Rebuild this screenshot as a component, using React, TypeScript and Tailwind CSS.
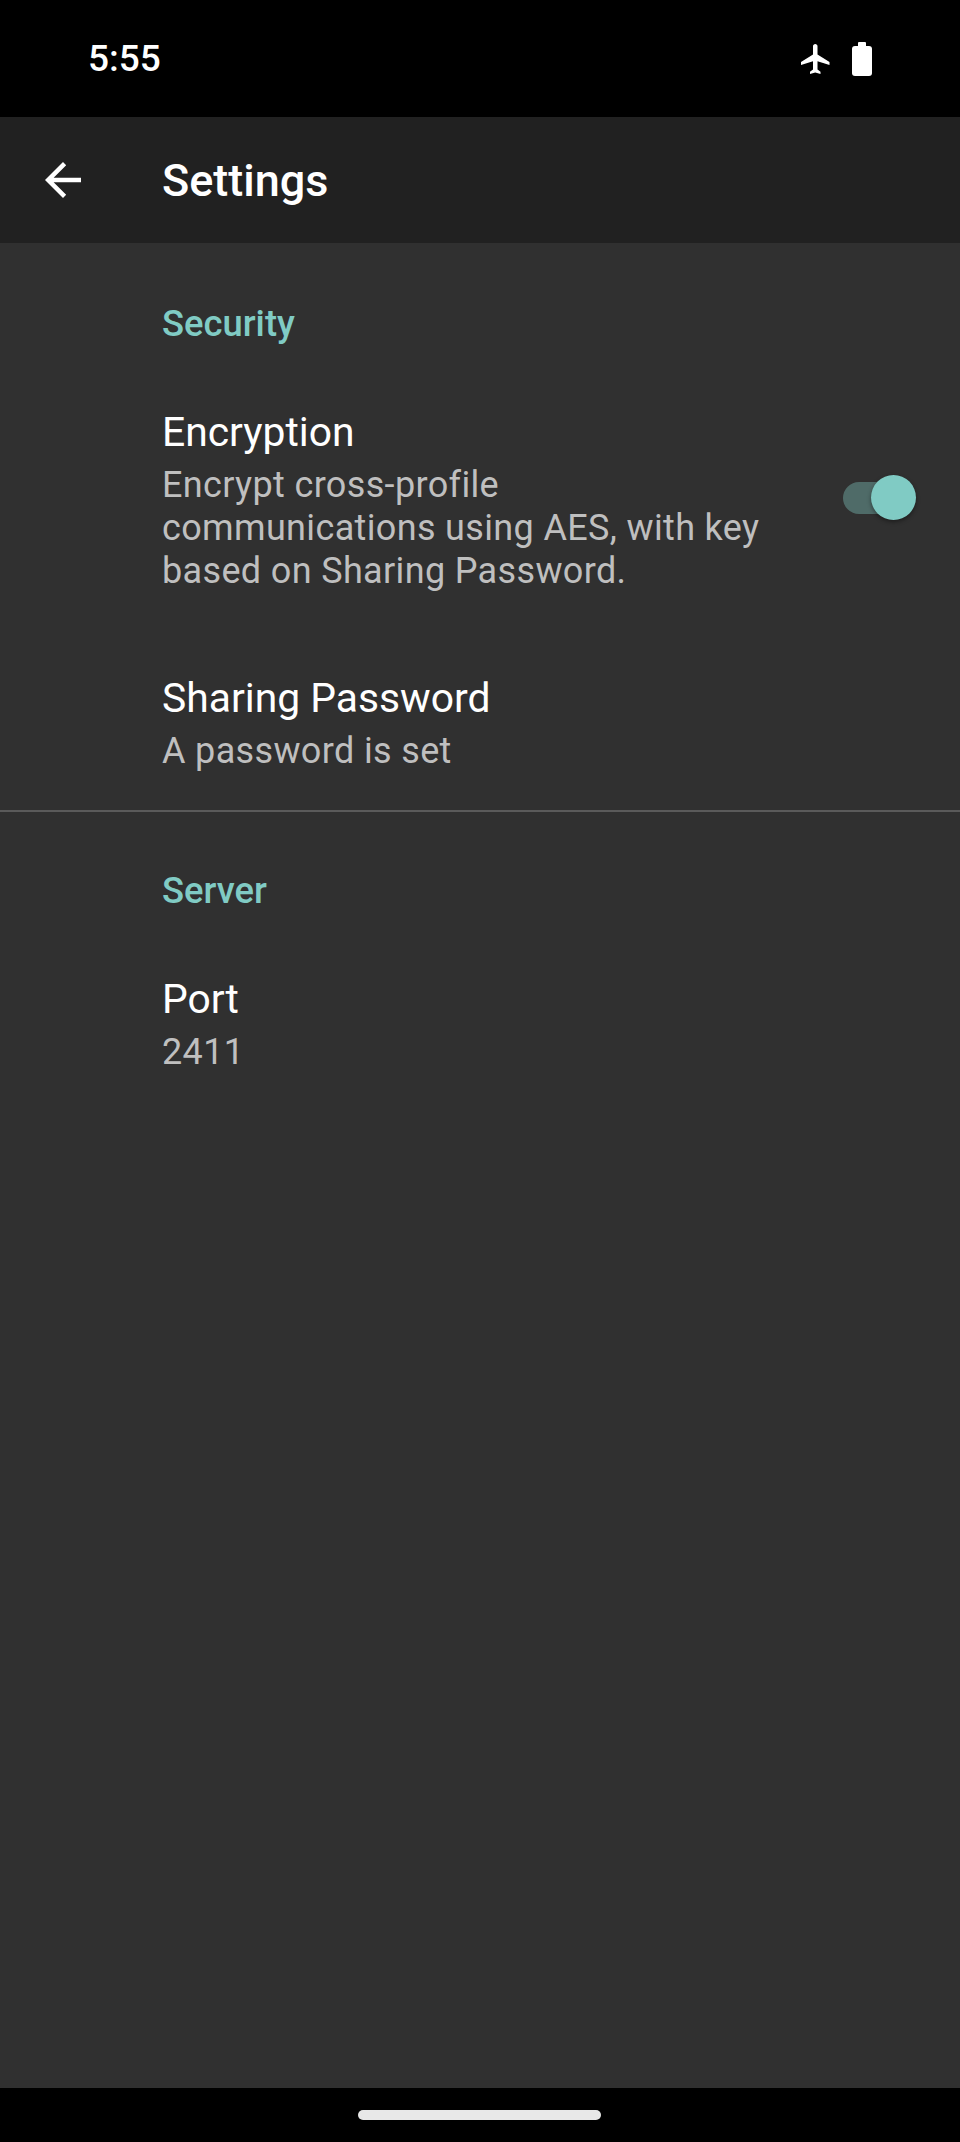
function Plane() {
  return (
    <svg viewBox="0 0 24 24" className="h-[36px] w-[36px] fill-white" aria-hidden>
      <path d="M21 16v-2l-8-5V3.5c0-.83-.67-1.5-1.5-1.5S10 2.67 10 3.5V9l-8 5v2l8-2.5V19l-2 1.5V22l3.5-1 3.5 1v-1.5L13 19v-5.5l8 2.5z" />
    </svg>
  );
}

function Battery() {
  return (
    <div className="flex flex-col items-center">
      <div className="h-[4px] w-[8px] rounded-t-[1px] bg-white" />
      <div className="h-[30px] w-[20px] rounded-[3px] bg-white" />
    </div>
  );
}

function SectionHeader({ title }: { title: string }) {
  return (
    <div className="pl-[162px] pt-[57px] pb-[16px] text-[36.4px] leading-[48px] font-medium text-[#80cbc4]">
      {title}
    </div>
  );
}

function Row({ title, summary, toggle }: { title: string; summary: string; toggle?: boolean }) {
  return (
    <div className="flex items-center pl-[162px] pr-[49px] pt-[44px] pb-[37px]">
      <div className="min-w-0 flex-1">
        <div className="text-[40.8px] leading-[48px] text-white">{title}</div>
        <div className="mt-[8px] max-w-[604px] text-[36px] leading-[43px] tracking-[0.35px] text-[#bfbfbf]">{summary}</div>
      </div>
      {toggle && (
        <div className="relative mb-[5px] h-[32px] w-[68px] rounded-full bg-[#4f6b68]">
          <div className="absolute -top-[7px] -right-[5px] h-[45px] w-[45px] rounded-full bg-[#80cbc4] shadow-[0_2px_4px_rgba(0,0,0,0.4)]" />
        </div>
      )}
    </div>
  );
}

export default function App() {
  return (
    <div className="flex h-[2142px] w-[960px] flex-col bg-[#303030] font-['Roboto',sans-serif]">
      <div className="flex h-[117px] items-center justify-between bg-black pl-[88px] pr-[88px]">
        <span className="text-[37px] font-medium text-white">5:55</span>
        <div className="flex items-center gap-[18px]">
          <Plane />
          <Battery />
        </div>
      </div>
      <div className="flex h-[126px] items-center bg-[#212121] pl-[36px]">
        <svg viewBox="0 0 24 24" className="h-[54px] w-[54px] fill-white" aria-hidden>
          <path d="M20 11H7.83l5.59-5.59L12 4l-8 8 8 8 1.41-1.41L7.83 13H20v-2z" />
        </svg>
        <span className="ml-[72px] pt-[2px] text-[45px] font-medium text-white">Settings</span>
      </div>
      <div className="flex-1">
        <SectionHeader title="Security" />
        <Row title="Encryption" summary="Encrypt cross-profile communications using AES, with key based on Sharing Password." toggle />
        <Row title="Sharing Password" summary="A password is set" />
        <div className="-mb-[2px] h-[2px] bg-[#5a5a5a]" />
        <SectionHeader title="Server" />
        <Row title="Port" summary="2411" />
      </div>
      <div className="flex h-[54px] items-center justify-center bg-black">
        <div className="mr-[1px] h-[10px] w-[243px] rounded-full bg-[#e8e8e8]" />
      </div>
    </div>
  );
}
